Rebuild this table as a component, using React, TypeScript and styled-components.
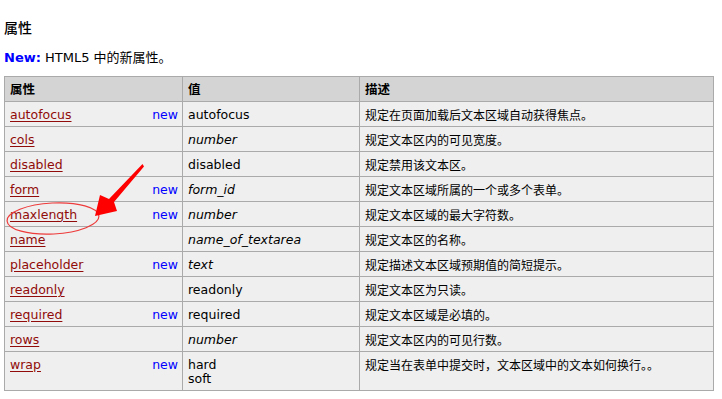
import React from "react";
import styled, { createGlobalStyle } from "styled-components";

const GlobalStyle = createGlobalStyle`
  html, body {
    margin: 0;
    padding: 0;
    background: #ffffff;
  }
  body {
    font-family: "DejaVu Sans", "Noto Sans CJK SC", sans-serif;
    font-size: 12.5px;
    color: #000;
  }
`;

const Page = styled.div`
  position: relative;
  width: 722px;
  height: 399px;
  padding: 17px 4px 0 4px;
  box-sizing: border-box;
  overflow: hidden;
`;

const Title = styled.h2`
  margin: 0;
  font-size: 14px;
  line-height: 20px;
  font-weight: 500;
  font-family: "Noto Sans CJK SC", sans-serif;
`;

const Note = styled.p`
  margin: 10px 0 0 0;
  line-height: 21px;
  font-size: 13px;
`;

const NewTag = styled.strong`
  color: #0000ff;
`;

const Table = styled.table`
  margin-top: 8px;
  width: 709px;
  border-collapse: collapse;
  table-layout: fixed;
  border: 1px solid #aaaaaa;
`;

const Th = styled.th`
  background: #d4d4d4;
  border: 1px solid #aaaaaa;
  padding: 6px 4px 4px 5px;
  text-align: left;
  font-weight: bold;
  font-size: 12.5px;
  line-height: 14px;
  vertical-align: top;
`;

const Td = styled.td<{ $cjk?: boolean }>`
  background: #efefef;
  border: 1px solid #aaaaaa;
  padding: 6px 4px 4px 5px;
  line-height: 14px;
  vertical-align: top;
  font-size: ${(p) => (p.$cjk ? "12px" : "12.5px")};
  font-family: ${(p) =>
    p.$cjk
      ? `"Noto Sans CJK SC", sans-serif`
      : `"DejaVu Sans", "Noto Sans CJK SC", sans-serif`};
`;

const AttrCell = styled.div`
  display: flex;
  justify-content: space-between;
`;

const AttrLink = styled.a`
  color: #900b09;
  text-decoration: underline;
  text-underline-offset: 2px;
`;

const NewMark = styled.span`
  color: #0000ff;
`;

const Value = styled.span<{ $italic?: boolean }>`
  display: block;
  font-style: ${(p) => (p.$italic ? "italic" : "normal")};
`;

const Annotation = styled.svg`
  position: absolute;
  left: 0;
  top: 0;
  pointer-events: none;
`;

type Row = {
  name: string;
  isNew: boolean;
  values: string[];
  italic: boolean;
  desc: string;
};

const rows: Row[] = [
  { name: "autofocus", isNew: true, values: ["autofocus"], italic: false, desc: "规定在页面加载后文本区域自动获得焦点。" },
  { name: "cols", isNew: false, values: ["number"], italic: true, desc: "规定文本区内的可见宽度。" },
  { name: "disabled", isNew: false, values: ["disabled"], italic: false, desc: "规定禁用该文本区。" },
  { name: "form", isNew: true, values: ["form_id"], italic: true, desc: "规定文本区域所属的一个或多个表单。" },
  { name: "maxlength", isNew: true, values: ["number"], italic: true, desc: "规定文本区域的最大字符数。" },
  { name: "name", isNew: false, values: ["name_of_textarea"], italic: true, desc: "规定文本区的名称。" },
  { name: "placeholder", isNew: true, values: ["text"], italic: true, desc: "规定描述文本区域预期值的简短提示。" },
  { name: "readonly", isNew: false, values: ["readonly"], italic: false, desc: "规定文本区为只读。" },
  { name: "required", isNew: true, values: ["required"], italic: false, desc: "规定文本区域是必填的。" },
  { name: "rows", isNew: false, values: ["number"], italic: true, desc: "规定文本区内的可见行数。" },
  { name: "wrap", isNew: true, values: ["hard", "soft"], italic: false, desc: "规定当在表单中提交时，文本区域中的文本如何换行。。" },
];

export default function App() {
  return (
    <>
      <GlobalStyle />
      <Page>
        <Title>属性</Title>
        <Note>
          <NewTag>New:</NewTag> HTML5 中的新属性。
        </Note>
        <Table>
          <colgroup>
            <col style={{ width: 178 }} />
            <col style={{ width: 177 }} />
            <col style={{ width: 354 }} />
          </colgroup>
          <thead>
            <tr>
              <Th>属性</Th>
              <Th>值</Th>
              <Th>描述</Th>
            </tr>
          </thead>
          <tbody>
            {rows.map((r) => (
              <tr key={r.name}>
                <Td>
                  <AttrCell>
                    <AttrLink href="#">{r.name}</AttrLink>
                    {r.isNew && <NewMark>new</NewMark>}
                  </AttrCell>
                </Td>
                <Td>
                  {r.values.map((v) => (
                    <Value key={v} $italic={r.italic}>
                      {v}
                    </Value>
                  ))}
                </Td>
                <Td $cjk>{r.desc}</Td>
              </tr>
            ))}
          </tbody>
        </Table>

        {/* red hand-drawn marks over the maxlength row */}
        <Annotation width="722" height="399" viewBox="0 0 722 399">
          <ellipse
            cx="53"
            cy="218.5"
            rx="46"
            ry="15.5"
            fill="none"
            stroke="#ee3b3b"
            strokeWidth="1.2"
            transform="rotate(-3 53 218.5)"
          />
          <polygon
            points="142.5,164 144,166.5 114,202 117,211 95,216 100,195 109,199"
            fill="#ff0000"
          />
        </Annotation>
      </Page>
    </>
  );
}
